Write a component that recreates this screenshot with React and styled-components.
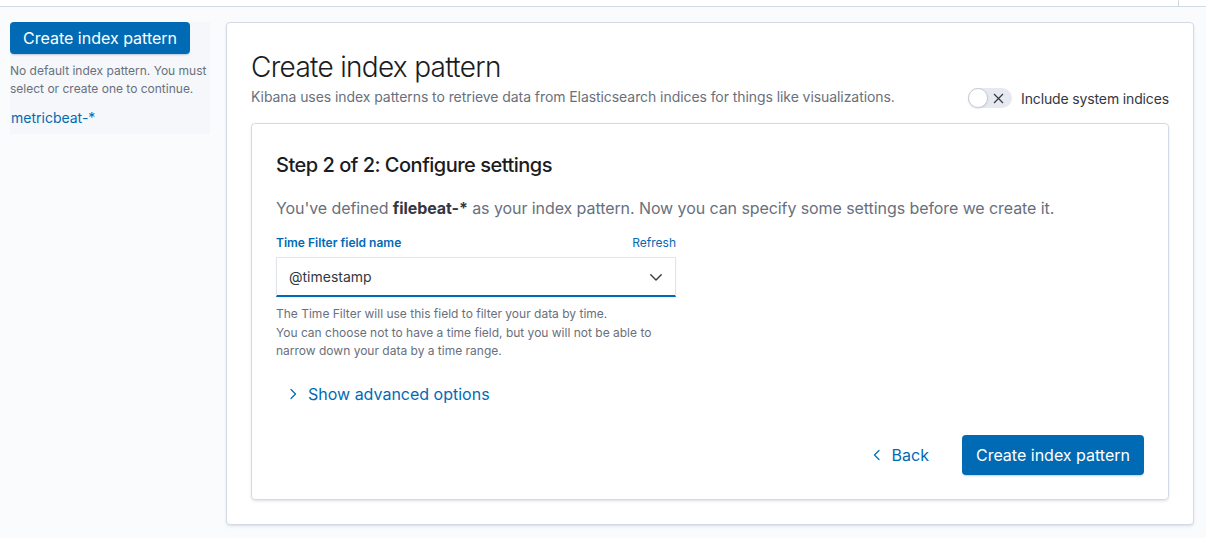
import React from 'react';
import styled, { createGlobalStyle } from 'styled-components';

const GlobalStyle = createGlobalStyle`
  html, body {
    margin: 0;
    padding: 0;
    background: #fafbfd;
    font-family: Inter, "Noto Sans", "Liberation Sans", sans-serif;
    color: #343741;
  }
  * { box-sizing: border-box; }
`;

const Header = styled.header`
  height: 7px;
  background: #fff;
  border-bottom: 1px solid #d3dae6;
  display: flex;
  justify-content: flex-end;
`;

const HeaderDivider = styled.div`
  width: 28px;
  border-left: 1px solid #d3dae6;
`;

const Body = styled.div`
  display: flex;
  align-items: flex-start;
  gap: 16px;
  padding: 15px 12px 14px 10px;
`;

const Sidebar = styled.aside`
  width: 200px;
  background: #f5f7fa;
  padding-bottom: 6px;
`;

const Button = styled.button`
  height: ${p => (p.$large ? '40px' : '32px')};
  padding: 0 ${p => (p.$large ? '14px' : '13px')};
  border: none;
  border-radius: 4px;
  background: #006bb4;
  color: #fff;
  font-family: inherit;
  font-size: 16px;
  line-height: 1;
  cursor: pointer;
  box-shadow: 0 2px 2px -1px rgba(54, 97, 126, 0.3);
`;

const SideText = styled.p`
  margin: 8px 0 0;
  font-size: 12px;
  line-height: 18px;
  color: #69707d;
`;

const SideLink = styled.a`
  display: block;
  margin-top: 10px;
  padding: 0 1px;
  font-size: 14px;
  line-height: 20px;
  color: #006bb4;
`;

const Panel = styled.section`
  flex: 1;
  background: #fff;
  border: 1px solid #d3dae6;
  border-radius: 4px;
  box-shadow: 0 1px 2px rgba(152, 162, 179, 0.15), 0 2px 4px -1px rgba(152, 162, 179, 0.2);
  padding: 26px 24px 24px 24px;
`;

const TopRow = styled.div`
  display: flex;
  align-items: flex-end;
  justify-content: space-between;
  margin-bottom: 16px;
`;

const Title = styled.h1`
  margin: 0;
  font-size: 28px;
  font-weight: 300;
  line-height: 37px;
  color: #1a1c21;
  letter-spacing: -0.025em;
`;

const Subtitle = styled.p`
  margin: 0;
  font-size: 14px;
  line-height: 21px;
  color: #69707d;
  letter-spacing: -0.005em;
`;

const SwitchWrap = styled.label`
  display: flex;
  align-items: center;
  gap: 9px;
  font-size: 14px;
  letter-spacing: -0.01em;
  color: #343741;
  margin: 0 0 -1px 0;
`;

const Track = styled.span`
  position: relative;
  width: 44px;
  height: 20px;
  border-radius: 10px;
  background: #e6eaf0;
  display: flex;
  align-items: center;
  justify-content: flex-end;
  padding-right: 8px;
`;

const Knob = styled.span`
  position: absolute;
  left: 0;
  top: 0;
  width: 20px;
  height: 20px;
  border-radius: 50%;
  background: #fff;
  border: 1px solid #c5ccd6;
  box-shadow: 0 1px 2px rgba(0, 0, 0, 0.1);
`;

const InnerPanel = styled.div`
  border: 1px solid #d3dae6;
  border-radius: 4px;
  box-shadow: 0 1px 2px rgba(152, 162, 179, 0.15), 0 2px 4px -1px rgba(152, 162, 179, 0.2);
  padding: 27px 24px 24px;
`;

const StepTitle = styled.h2`
  margin: 0;
  font-size: 20px;
  font-weight: 500;
  line-height: 28px;
  color: #1a1c21;
  letter-spacing: -0.025em;
`;

const Lead = styled.p`
  margin: 17px 0 0;
  font-size: 16px;
  line-height: 24px;
  color: #69707d;
  letter-spacing: -0.005em;

  strong {
    color: #343741;
    font-weight: 700;
  }
`;

const Field = styled.div`
  width: 400px;
  margin-top: 13px;
`;

const LabelRow = styled.div`
  display: flex;
  justify-content: space-between;
  align-items: center;
  height: 18px;
  margin-bottom: 6px;
`;

const Label = styled.span`
  font-size: 12px;
  font-weight: 600;
  color: #006bb4;
`;

const SmallLink = styled.a`
  font-size: 12px;
  color: #006bb4;
`;

const Select = styled.div`
  height: 40px;
  display: flex;
  align-items: center;
  justify-content: space-between;
  padding: 0 12px;
  background: #fff;
  border: 1px solid #e1e5ec;
  border-bottom: 2px solid #006bb4;
  box-shadow: 0 1px 2px rgba(0, 0, 0, 0.06);
  font-size: 14px;
  color: #343741;
`;

const Help = styled.p`
  margin: 8px 0 0;
  font-size: 12px;
  line-height: 18.5px;
  color: #69707d;
`;

const Toggle = styled.button`
  display: flex;
  align-items: center;
  gap: 9px;
  margin: 21px 0 0 11px;
  padding: 0;
  border: none;
  background: none;
  font-family: inherit;
  font-size: 16px;
  line-height: 24px;
  color: #006bb4;
`;

const Footer = styled.div`
  display: flex;
  justify-content: flex-end;
  align-items: center;
  gap: 16px;
  margin-top: 29px;
`;

const EmptyButton = styled.button`
  height: 40px;
  display: flex;
  align-items: center;
  gap: 9px;
  padding: 0 17px;
  border: none;
  background: none;
  font-family: inherit;
  font-size: 16px;
  color: #006bb4;
`;

const Chevron = ({ dir = 'down', size = 12, color = '#343741' }) => {
  const paths = {
    down: 'M1.5 4 L6 8.5 L10.5 4',
    right: 'M4 1.5 L8.5 6 L4 10.5',
    left: 'M8 1.5 L3.5 6 L8 10.5',
  };
  return (
    <svg width={size} height={size} viewBox="0 0 12 12" fill="none">
      <path d={paths[dir]} stroke={color} strokeWidth="1.2" strokeLinecap="round" strokeLinejoin="round" />
    </svg>
  );
};

const Cross = () => (
  <svg width="11" height="11" viewBox="0 0 11 11" fill="none">
    <path d="M1 1 L10 10 M10 1 L1 10" stroke="#343741" strokeWidth="1.2" />
  </svg>
);

export default function App() {
  return (
    <>
      <GlobalStyle />
      <Header>
        <HeaderDivider />
      </Header>
      <Body>
        <Sidebar>
          <Button>Create index pattern</Button>
          <SideText>No default index pattern. You must select or create one to continue.</SideText>
          <SideLink>metricbeat-*</SideLink>
        </Sidebar>
        <Panel>
          <TopRow>
            <div>
              <Title>Create index pattern</Title>
              <Subtitle>Kibana uses index patterns to retrieve data from Elasticsearch indices for things like visualizations.</Subtitle>
            </div>
            <SwitchWrap>
              <Track>
                <Knob />
                <Cross />
              </Track>
              Include system indices
            </SwitchWrap>
          </TopRow>
          <InnerPanel>
            <StepTitle>Step 2 of 2: Configure settings</StepTitle>
            <Lead>
              You've defined <strong>filebeat-*</strong> as your index pattern. Now you can specify some settings before we create it.
            </Lead>
            <Field>
              <LabelRow>
                <Label>Time Filter field name</Label>
                <SmallLink>Refresh</SmallLink>
              </LabelRow>
              <Select>
                <span>@timestamp</span>
                <Chevron dir="down" size={14} />
              </Select>
              <Help>
                The Time Filter will use this field to filter your data by time.
                <br />
                You can choose not to have a time field, but you will not be able to narrow down your data by a time range.
              </Help>
            </Field>
            <Toggle>
              <Chevron dir="right" color="#006bb4" />
              Show advanced options
            </Toggle>
            <Footer>
              <EmptyButton>
                <Chevron dir="left" color="#006bb4" />
                Back
              </EmptyButton>
              <Button $large>Create index pattern</Button>
            </Footer>
          </InnerPanel>
        </Panel>
      </Body>
    </>
  );
}
